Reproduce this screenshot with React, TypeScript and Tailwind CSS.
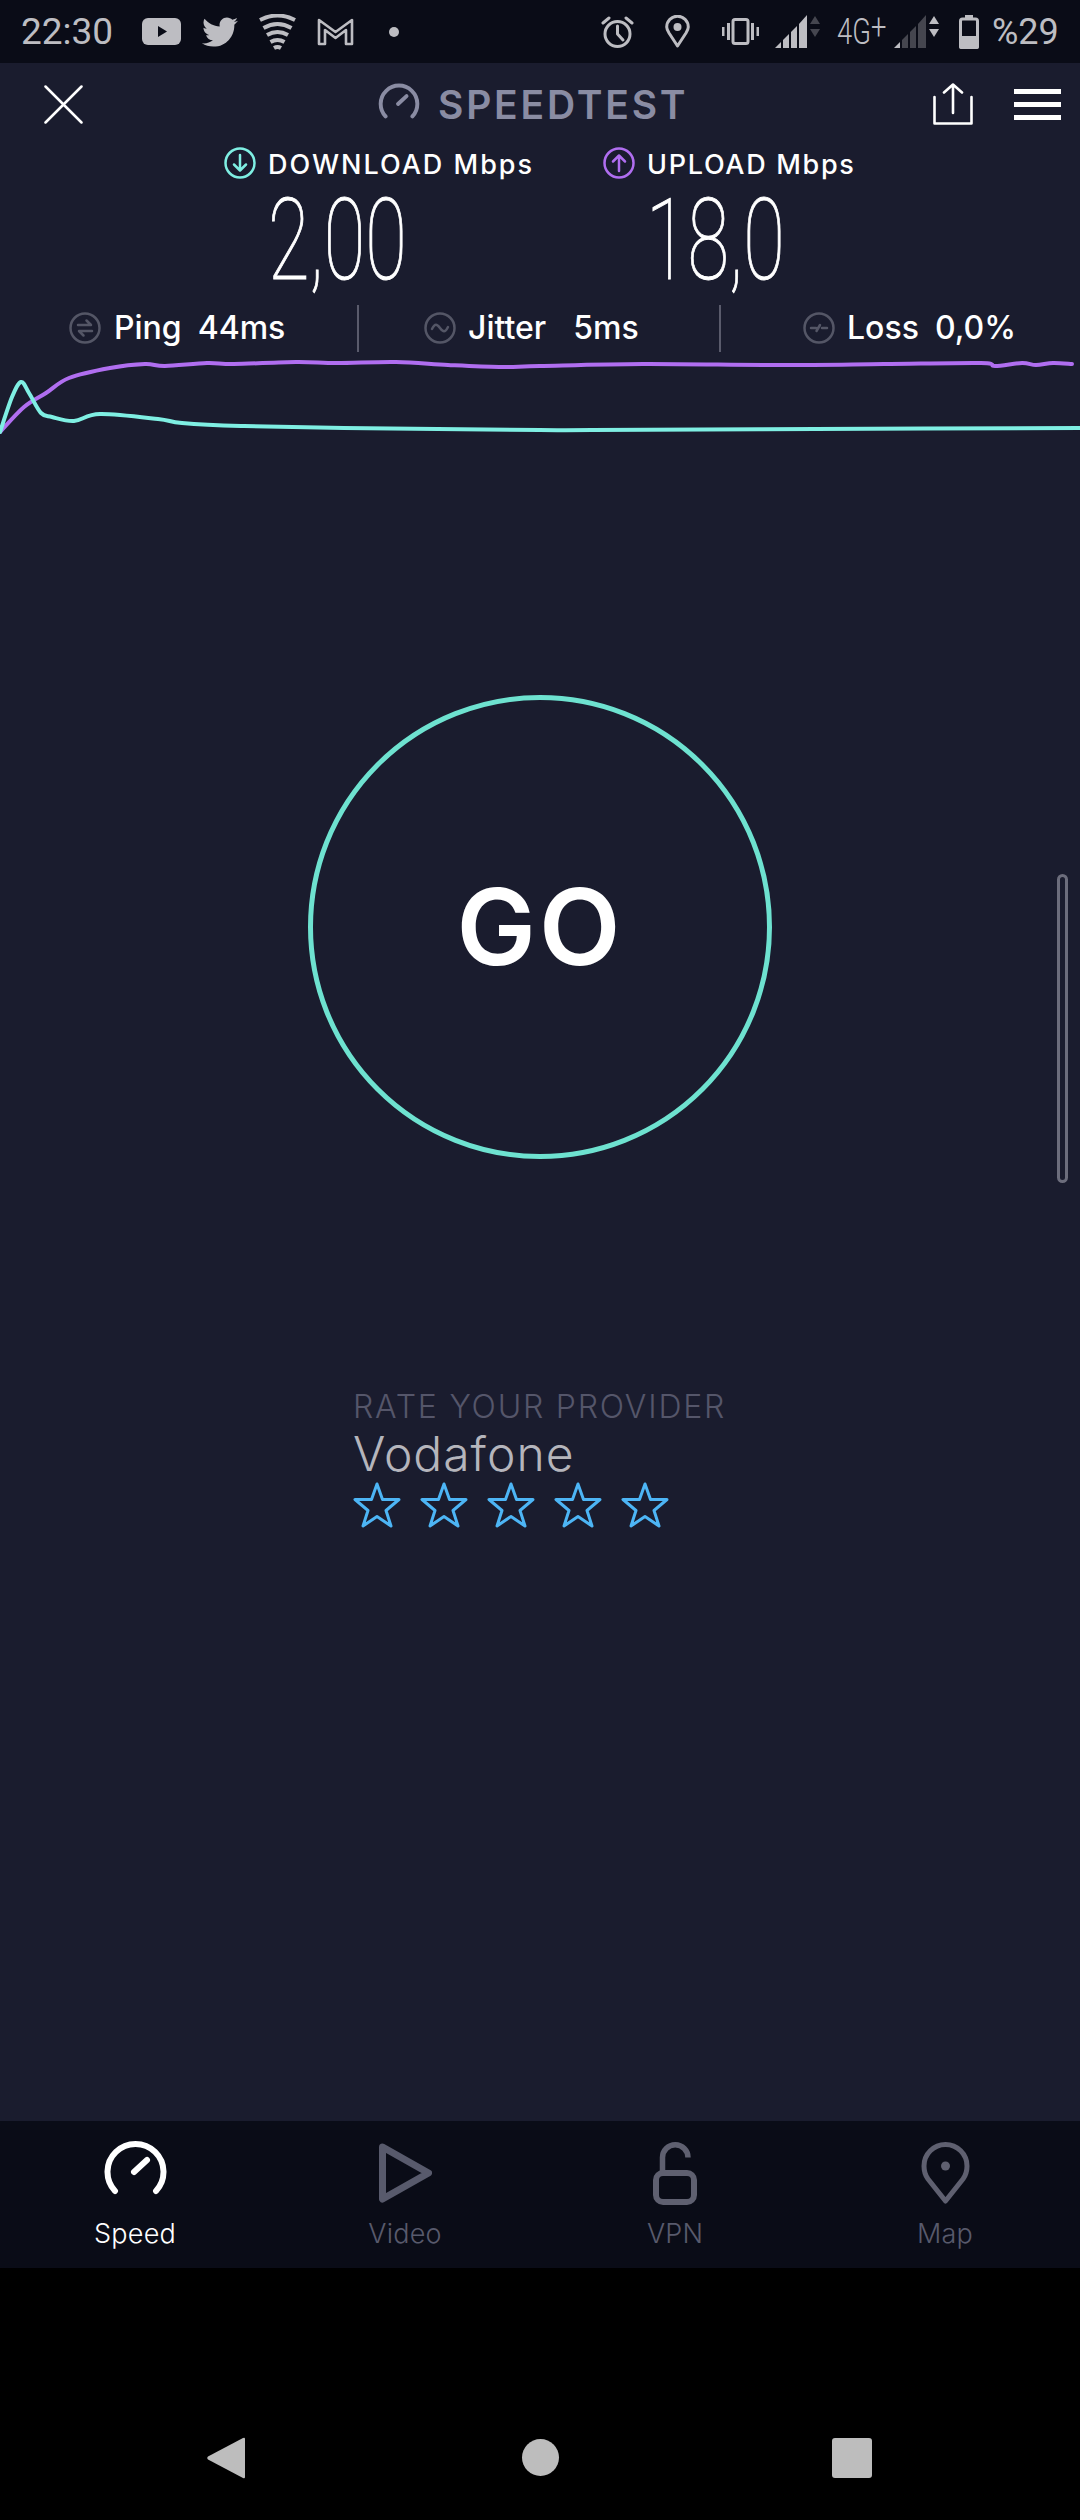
import React from "react";
import { FaTwitter } from "react-icons/fa";

type P = [number, number];
const smooth = (pts: P[]) => {
  let d = `M${pts[0][0]} ${pts[0][1]}`;
  for (let i = 0; i < pts.length - 1; i++) {
    const p0 = pts[Math.max(i - 1, 0)], p1 = pts[i], p2 = pts[i + 1], p3 = pts[Math.min(i + 2, pts.length - 1)];
    const k = 6;
    d += ` C${p1[0] + (p2[0] - p0[0]) / k} ${p1[1] + (p2[1] - p0[1]) / k} ${p2[0] - (p3[0] - p1[0]) / k} ${p2[1] - (p3[1] - p1[1]) / k} ${p2[0]} ${p2[1]}`;
  }
  return d;
};
const purple: P[] = [[0,432],[24,407],[46,393],[69,378],[110,368],[145,364],[165,366],[207,363],[234,364],[296,362],[337,363],[396,362],[448,365],[499,367],[540,366],[643,364],[781,365],[884,364],[981,363],[995,366],[1022,363],[1036,365],[1053,363],[1072,364]];
const teal: P[] = [[0,432],[12,397],[21,382],[29,393],[41,413],[52,417],[74,421],[100,414],[158,419],[182,423],[241,426],[344,428],[540,430],[592,430],[815,429],[1080,428]];

const ICON = "#bdbdc2";
const Signal = ({ dim, arrowUp, arrowDown }: { dim: boolean; arrowUp: string; arrowDown: string }) => {
  const on = dim ? "#45464f" : ICON;
  return (
    <svg width="45" height="33" viewBox="0 0 45 33" className="block">
      <polygon points="0,33 6,27 6,33" fill={ICON} />
      <polygon points="8,25 14,19 14,33 8,33" fill={on} />
      <polygon points="16,17 22,11 22,33 16,33" fill={on} />
      <polygon points="24,9 32,0 32,33 24,33" fill={on} />
      <polygon points="35,9 40,1 45,9" fill={arrowUp} />
      <polygon points="35,14 40,22 45,14" fill={arrowDown} />
    </svg>
  );
};
const Gauge = ({ w, h, color, sw }: { w: number; h: number; color: string; sw: number }) => (
  <svg width={w} height={h} viewBox="0 0 63 55" className="block" fill="none" stroke={color} strokeLinecap="round">
    <path d="M11 51A28 28 0 1 1 52 51" strokeWidth={sw} />
    <path d="M30 32L43 20" strokeWidth={sw} />
  </svg>
);
const Ring = ({ color, children }: { color: string; children: React.ReactNode }) => (
  <svg width="32" height="32" viewBox="0 0 32 32" className="block shrink-0" fill="none" stroke={color} strokeWidth="2.5" strokeLinecap="round" strokeLinejoin="round">
    <circle cx="16" cy="16" r="14.5" />
    {children}
  </svg>
);
const Star = () => (
  <svg width="48" height="46" viewBox="0 0 48 46" className="block shrink-0" fill="none" stroke="#4db5f5" strokeWidth="3" strokeLinejoin="round">
    <polygon points="24,2 29.5,17.5 46,17.5 33,28.5 38,44 24,34.5 10,44 15,28.5 2,17.5 18.5,17.5" />
  </svg>
);
const Tab = ({ label, active, children }: { label: string; active?: boolean; children: React.ReactNode }) => (
  <div className="w-[270px] flex flex-col items-center">
    <div className="h-[97px] pt-[19px] flex items-start justify-center">{children}</div>
    <div className={`text-[27px] leading-[32px] font-[Inter,sans-serif] font-light tracking-[0.2px] ${active ? "text-white" : "text-[#585a6c]"}`}>{label}</div>
  </div>
);

export default function App() {
  return (
    <div className="w-[1080px] h-[2520px] flex flex-col bg-black overflow-hidden relative">
      {/* Status bar */}
      <div className="h-[63px] bg-[#0a0c17] flex items-center shrink-0 pl-[21px] text-[#bdbdc2] font-[Roboto,sans-serif]">
        <span className="w-[121px] text-[37px] leading-none">22:30</span>
        <svg width="39" height="27" viewBox="0 0 39 27" className="block">
          <rect width="39" height="27" rx="6" fill={ICON} />
          <polygon points="16,8 25,13.5 16,19" fill="#0a0c17" />
        </svg>
        <FaTwitter className="ml-[21px] block" size={36} color={ICON} />
        <svg width="37" height="36" viewBox="0 0 37 36" className="block ml-[21px]" fill="none" stroke={ICON}>
          <path d="M1 6Q18.5 -3 36 6" strokeWidth="4" />
          <path d="M4.5 14Q18.5 6 32.5 14" strokeWidth="4" />
          <path d="M8 21Q18.5 15 29 21" strokeWidth="4" />
          <path d="M11.5 28Q18.5 24 25.5 28" strokeWidth="4" />
          <path d="M15 34Q18.5 32 22 34" strokeWidth="4" />
        </svg>
        <svg width="37" height="28" viewBox="0 0 37 28" className="block ml-[21px]" fill="none" stroke={ICON} strokeWidth="2.6" strokeLinejoin="round">
          <path d="M2 2L18.5 14L35 2V26H29V12L18.5 20L8 12V26H2Z" />
        </svg>
        <span className="ml-[35px] w-[10px] h-[10px] rounded-full bg-[#bdbdc2]" />
        <div className="flex-1" />
        <svg width="33" height="34" viewBox="0 0 33 34" className="block" fill="none" stroke={ICON} strokeWidth="3" strokeLinecap="round" strokeLinejoin="round">
          <circle cx="16.5" cy="19" r="12.5" />
          <path d="M16.5 11V19L22 25" />
          <path d="M2 8L8 3M31 8L25 3" />
        </svg>
        <svg width="25" height="33" viewBox="0 0 25 33" className="block ml-[31px]" fill="none" stroke={ICON} strokeWidth="3" strokeLinejoin="round">
          <path d="M12.5 31L4 18C2.5 15.5 1.7 14 1.7 12A10.8 10.8 0 0 1 23.3 12C23.3 14 22.5 15.5 21 18Z" />
          <circle cx="12.5" cy="12" r="4" fill={ICON} stroke="none" />
        </svg>
        <svg width="37" height="27" viewBox="0 0 37 27" className="block ml-[32px]" fill={ICON}>
          <rect x="11" y="1.5" width="15" height="24" rx="2" fill="none" stroke={ICON} strokeWidth="3" />
          <rect x="0" y="9" width="2.5" height="9" />
          <rect x="5" y="5" width="3" height="17" />
          <rect x="29" y="5" width="3" height="17" />
          <rect x="34.5" y="9" width="2.5" height="9" />
        </svg>
        <div className="ml-[16px]"><Signal dim={false} arrowUp="#45464f" arrowDown="#45464f" /></div>
        <span className="ml-[17px] w-[50px] text-[36px] leading-none font-light scale-x-[0.76] origin-left whitespace-nowrap">4G<span className="relative -top-[5px]">+</span></span>
        <div className="ml-[7px]"><Signal dim arrowUp={ICON} arrowDown={ICON} /></div>
        <svg width="20" height="34" viewBox="0 0 20 34" className="block ml-[20px]" fill={ICON}>
          <rect x="6" y="0" width="8" height="3" />
          <rect x="1.5" y="4" width="17" height="28.5" rx="2" fill="none" stroke={ICON} strokeWidth="3" />
          <rect x="0" y="21" width="20" height="13" rx="2" />
        </svg>
        <span className="ml-[13px] mr-[23px] w-[65px] text-[36px] leading-none whitespace-nowrap">%29</span>
      </div>

      {/* Main */}
      <div className="h-[2058px] shrink-0 bg-[#1a1c2e] flex flex-col relative">
        {/* Header */}
        <div className="h-[82px] flex items-center pl-[44px] pr-[19px] shrink-0">
          <svg width="39" height="39" viewBox="0 0 39 39" className="block" fill="none" stroke="#fff" strokeWidth="2.5" strokeLinecap="round">
            <path d="M1.5 1.5L37.5 37.5M37.5 1.5L1.5 37.5" />
          </svg>
          <div className="ml-[295px] -mt-[6px]"><Gauge w={42} h={36} color="#8a8ca3" sw={6} /></div>
          <span className="ml-[18px] text-[39px] leading-none font-[Inter,sans-serif] font-semibold tracking-[2.8px] text-[#8a8ca3]">SPEEDTEST</span>
          <div className="flex-1" />
          <svg width="40" height="42" viewBox="0 0 40 42" className="block" fill="none" stroke="#fff" strokeWidth="2.6" strokeLinecap="round" strokeLinejoin="round">
            <path d="M1.5 14V40.5H38.5V14" />
            <path d="M20 30V2M11 9.5L20 1.5L29 9.5" />
          </svg>
          <div className="ml-[41px] w-[47px] h-[31px] flex flex-col justify-between">
            <div className="h-[5px] bg-white" />
            <div className="h-[5px] bg-white" />
            <div className="h-[5px] bg-white" />
          </div>
        </div>

        {/* Labels */}
        <div className="h-[36px] flex items-center pl-[224px] shrink-0 text-white text-[27px] leading-none font-[Inter,sans-serif] font-medium">
          <div className="w-[379px] flex items-center">
            <Ring color="#7fefe3"><path d="M16 8V23M10 17.5L16 23.5L22 17.5" /></Ring>
            <span className="ml-[12px] mt-[3px] tracking-[2px] whitespace-nowrap">DOWNLOAD Mbps</span>
          </div>
          <Ring color="#b06ef0"><path d="M16 24V9M10 14.5L16 8.5L22 14.5" /></Ring>
          <span className="ml-[12px] mt-[3px] tracking-[1.7px] whitespace-nowrap">UPLOAD Mbps</span>
        </div>

        {/* Numbers */}
        <div className="h-[118px] flex items-center pl-[268px] shrink-0 text-white font-[Roboto,sans-serif] font-thin text-[114px] leading-none [-webkit-text-stroke:1px_#ffffff]">
          <div className="w-[378px]"><span className="inline-block origin-left scale-x-[0.665] whitespace-nowrap">2,00</span></div>
          <div><span className="inline-block origin-left scale-x-[0.665] whitespace-nowrap">18,0</span></div>
        </div>

        {/* Metrics */}
        <div className="h-[58px] flex items-center pl-[69px] shrink-0 text-white text-[32px] leading-none font-[Inter,sans-serif] font-medium">
          <div className="w-[288px] flex items-center">
            <Ring color="#545666"><path d="M9 13H22L17.5 8.5M23 19H10L14.5 23.5" /></Ring>
            <span className="ml-[13px]">Ping</span>
            <span className="ml-[16px]">44ms</span>
          </div>
          <div className="w-[2px] h-[47px] bg-[#5a5b6c]" />
          <div className="ml-[65px] w-[295px] flex items-center">
            <Ring color="#545666"><path d="M8 17C11 11 13 12 16 16C19 20 21 21 24 15" /></Ring>
            <span className="ml-[12px]">Jitter</span>
            <span className="ml-[27px]">5ms</span>
          </div>
          <div className="w-[2px] h-[47px] bg-[#5a5b6c]" />
          <div className="ml-[82px] flex items-center">
            <Ring color="#545666"><path d="M8 16H13M19 16H24M13.5 19L17 13" /></Ring>
            <span className="ml-[12px]">Loss</span>
            <span className="ml-[16px]">0,0%</span>
          </div>
        </div>

        {/* Chart */}
        <svg width="1080" height="80" viewBox="0 357 1080 80" className="block shrink-0" fill="none" strokeWidth="4" strokeLinecap="round" strokeLinejoin="round">
          <path d={smooth(purple)} stroke="#b06ef0" />
          <path d={smooth(teal)} stroke="#7fefe3" />
        </svg>

        {/* GO */}
        <div className="mt-[258px] mx-auto w-[464px] h-[464px] rounded-full border-[5px] border-[#6ee2d0] flex items-center justify-center shrink-0">
          <span className="text-white text-[106px] leading-none font-[Inter,sans-serif] font-semibold tracking-[3px]">GO</span>
        </div>

        {/* Rating */}
        <div className="mt-[229px] pl-[353px] shrink-0 font-[Inter,sans-serif] font-light">
          <div className="text-[32px] leading-[38px] text-[#55566a] whitespace-nowrap tracking-[1.8px]">RATE YOUR PROVIDER</div>
          <div className="text-[48px] leading-[56px] text-[#b5b5bc] tracking-[1px]">Vodafone</div>
          <div className="flex gap-[19px]">
            <Star /><Star /><Star /><Star /><Star />
          </div>
        </div>

        {/* Scrollbar indicator */}
        <div className="absolute left-[1057px] top-[811px] w-[11px] h-[309px] rounded-full border-[3px] border-[#6c6d7c]" />
      </div>

      {/* Tabs */}
      <div className="h-[147px] bg-[#0a0c17] flex shrink-0">
        <Tab label="Speed" active><Gauge w={63} h={55} color="#ffffff" sw={6} /></Tab>
        <Tab label="Video">
          <svg width="53" height="60" viewBox="0 0 53 60" className="block mt-[3px]" fill="none" stroke="#585a6c" strokeWidth="7" strokeLinejoin="round">
            <path d="M3.5 4L49.5 30L3.5 56Z" />
          </svg>
        </Tab>
        <Tab label="VPN">
          <svg width="44" height="63" viewBox="0 0 44 63" className="block mt-[2px]" fill="none" stroke="#5f6070">
            <rect x="3" y="31" width="38" height="29" rx="7" strokeWidth="6" />
            <path d="M9.5 29V15.5A12.7 12.7 0 0 1 35 15.5" strokeWidth="5.5" />
          </svg>
        </Tab>
        <Tab label="Map">
          <svg width="49" height="63" viewBox="0 0 49 63" className="block mt-[2px]" fill="none" stroke="#5f6070" strokeWidth="5" strokeLinejoin="round">
            <path d="M24.5 59L7 37C4 33 3 29 3 24A21.5 21.5 0 0 1 46 24C46 29 45 33 42 37Z" />
            <circle cx="24.5" cy="24" r="4.5" fill="#5f6070" stroke="none" />
          </svg>
        </Tab>
      </div>

      {/* Android nav */}
      <div className="flex-1 bg-black flex items-start pl-[207px] pt-[169px]">
        <svg width="38" height="42" viewBox="0 0 38 42" className="block">
          <path d="M36 1L1 19.5Q-0.5 21 1 22.5L36 41Q38 42 38 40V2Q38 0 36 1Z" fill="#bdbdbd" />
        </svg>
        <div className="ml-[277px] mt-[2px] w-[37px] h-[37px] rounded-full bg-[#bdbdbd]" />
        <div className="ml-[273px] mt-[1px] w-[40px] h-[40px] rounded-[3px] bg-[#bdbdbd]" />
      </div>
    </div>
  );
}
